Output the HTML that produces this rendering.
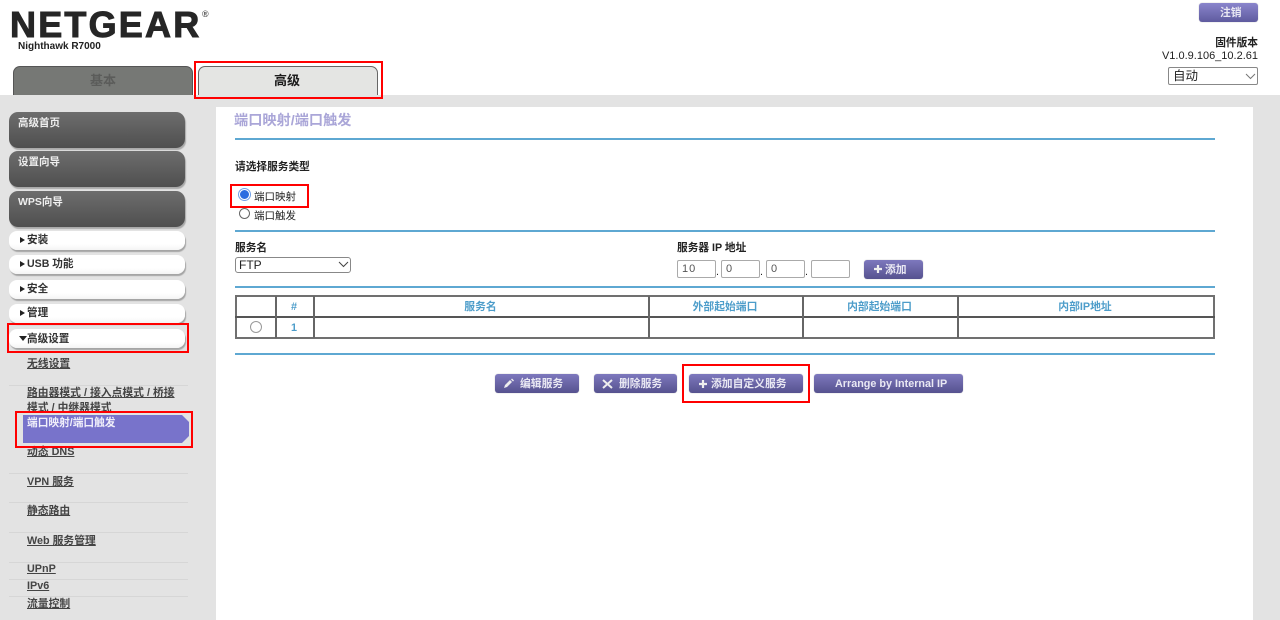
<!DOCTYPE html>
<html lang="zh"><head><meta charset="utf-8"><style>
html,body{margin:0;padding:0;width:1280px;height:620px;overflow:hidden;background:#fff}
body{position:relative;font-family:"Liberation Sans","Noto Sans CJK SC",sans-serif;color:#222;filter:blur(.35px)}
div,span,svg{position:absolute}
.t{white-space:nowrap;font-size:10.7px;font-weight:700;line-height:14px}
.dk{left:9px;width:176px;height:36px;border-radius:9px;background:linear-gradient(#6d6d6d,#4f4f4f);box-shadow:1px 2px 1px #a9a9a9;color:#eee}
.dk span{left:9px;top:4px;font-size:10.5px;font-weight:700;line-height:14px;white-space:nowrap}
.wh{left:9px;width:176px;height:19px;border-radius:8px;background:linear-gradient(#fff 70%,#f4f4f4);box-shadow:1px 2px 1px #a5a5a5}
.wh span{left:18px;top:2px;font-size:10.6px;font-weight:700;line-height:14px;color:#333;white-space:nowrap}
.wh i{position:absolute;left:11px;top:6px;width:0;height:0;border-left:5px solid #222;border-top:3.500px solid transparent;border-bottom:3.500px solid transparent}
.lk{left:27px;color:#444;font-size:10.8px;font-weight:700;line-height:14px;text-decoration:underline;white-space:nowrap}
.sep{left:9px;width:179px;height:1px;background:#d6d6d6}
.bl{left:235px;width:980px;height:2px;background:#5ea8d2}
.btn{height:19px;border-radius:3px;background:linear-gradient(#7d78bd,#56528f);box-shadow:0 0 1px #aaa;color:#e9e8f3;font-size:10.8px;font-weight:700;line-height:20px;text-align:center;white-space:nowrap}
.btl{text-align:left}
.red{border:2px solid #f00;box-sizing:border-box}
.ip{top:260px;height:18px;box-sizing:border-box;border:1px solid #aaa;border-radius:2px;background:#fff;font-size:11px;line-height:16px;color:#555;padding-left:4px;letter-spacing:1px}
.sel{box-sizing:border-box;border:1px solid #888;border-radius:2px;background:#fff;font-size:12px;color:#222}
.th{top:298px;height:19px;line-height:19px;font-size:10.8px;font-weight:700;color:#4d9dca;text-align:center}
.v{width:2px;top:296px;height:42px;background:#666}
</style></head><body>

<!-- Header -->
<div class="t" style="left:10px;top:4px;font-size:36px;line-height:42px;font-weight:700;letter-spacing:2.200px;color:#262626;-webkit-text-stroke:1px #262626">NETGEAR</div>
<div class="t" style="left:202px;top:9px;font-size:9px;line-height:11px;color:#555">®</div>
<div class="t" style="left:18px;top:40px;font-size:10px;line-height:13px;color:#222">Nighthawk R7000</div>

<div style="left:13px;top:66px;width:180px;height:29px;box-sizing:border-box;background:#767875;border:1px solid #555;border-bottom:0;border-radius:7px 7px 0 0"></div>
<div class="t" style="left:90px;top:72px;font-size:13px;line-height:17px;color:#5b5c5a">基本</div>
<div style="left:198px;top:66px;width:180px;height:29px;box-sizing:border-box;background:#e4e5e3;border:1px solid #666;border-bottom:0;border-radius:7px 7px 0 0"></div>
<div class="t" style="left:274px;top:72px;font-size:13px;line-height:17px;color:#1c1c1c">高级</div>

<div class="btn btl" style="left:1199px;top:3px;width:59px;height:19px;background:linear-gradient(#8a85cc,#5f5b9f);text-indent:21px">注销</div>
<div class="t" style="right:22px;top:36px;color:#222">固件版本</div>
<div class="t" style="right:22px;top:49px;font-weight:400;font-size:11px;color:#222">V1.0.9.106_10.2.61</div>
<div class="sel" style="left:1168px;top:67px;width:90px;height:18px;padding-left:4px;line-height:16px;font-size:12.5px">自动</div>
<svg style="left:1245px;top:73px" width="11" height="7" viewBox="0 0 11 7"><path d="M1 1l4.500 4.500L10 1" fill="none" stroke="#777" stroke-width="1"/></svg>

<!-- Backgrounds -->
<div style="left:0;top:95px;width:1280px;height:525px;background:#e3e3e3"></div>
<div style="left:216px;top:107px;width:1037px;height:513px;background:#fff"></div>

<!-- Sidebar -->
<div class="dk" style="top:112px"><span>高级首页</span></div>
<div class="dk" style="top:151px"><span>设置向导</span></div>
<div class="dk" style="top:191px"><span>WPS向导</span></div>
<div class="wh" style="top:231px"><i></i><span>安装</span></div>
<div class="wh" style="top:255px"><i></i><span>USB 功能</span></div>
<div class="wh" style="top:280px"><i></i><span>安全</span></div>
<div class="wh" style="top:304px"><i></i><span>管理</span></div>
<div class="wh" style="top:329px"><i style="left:10px;top:7px;border-left:4px solid transparent;border-right:4px solid transparent;border-top:5px solid #222;border-bottom:0"></i><span style="top:3px">高级设置</span></div>

<div class="lk" style="top:357px">无线设置</div>
<div class="sep" style="top:385px"></div>
<div class="lk" style="top:386px">路由器模式 / 接入点模式 / 桥接</div>
<div class="lk" style="top:401px">模式 / 中继器模式</div>
<svg style="left:23px;top:415px" width="167" height="28" viewBox="0 0 167 28"><path d="M0 0H159L166 7V21L159 28H0Z" fill="#7873cb"/></svg>
<div class="t" style="left:27px;top:416px;color:#f0effa">端口映射/端口触发</div>
<div class="lk" style="top:445px">动态 DNS</div>
<div class="sep" style="top:473px"></div>
<div class="lk" style="top:475px">VPN 服务</div>
<div class="sep" style="top:502px"></div>
<div class="lk" style="top:504px">静态路由</div>
<div class="sep" style="top:532px"></div>
<div class="lk" style="top:534px">Web 服务管理</div>
<div class="sep" style="top:562px"></div>
<div class="lk" style="top:562px">UPnP</div>
<div class="sep" style="top:579px"></div>
<div class="lk" style="top:579px">IPv6</div>
<div class="sep" style="top:596px"></div>
<div class="lk" style="top:597px">流量控制</div>

<!-- Main -->
<div class="t" style="left:234px;top:112px;font-size:14.2px;line-height:18px;color:#aaa6d8">端口映射/端口触发</div>
<div class="bl" style="top:138px"></div>
<div class="t" style="left:235px;top:160px;color:#222">请选择服务类型</div>

<div style="left:239px;top:189px;width:11px;height:11px;box-sizing:border-box;border-radius:50%;background:#2c6ce0;border:1.500px solid #fff;box-shadow:0 0 0 1px #6f9fe8"></div>
<div class="t" style="left:254px;top:190px;font-weight:400;font-size:10.5px;color:#222">端口映射</div>
<div style="left:239px;top:208px;width:11px;height:11px;box-sizing:border-box;border-radius:50%;background:#fff;border:1px solid #666"></div>
<div class="t" style="left:254px;top:209px;font-weight:400;font-size:10.5px;color:#222">端口触发</div>
<div class="bl" style="top:230px"></div>

<div class="t" style="left:235px;top:241px;color:#222">服务名</div>
<div class="sel" style="left:235px;top:257px;width:116px;height:16px;border-color:#888;border-radius:3px;line-height:14px;padding-left:3px">FTP</div>
<svg style="left:338px;top:261px" width="11" height="7" viewBox="0 0 11 7"><path d="M1 1l4.500 4.500L10 1" fill="none" stroke="#444" stroke-width="1"/></svg>

<div class="t" style="left:677px;top:241px;color:#222">服务器 IP 地址</div>
<div class="ip" style="left:677px;width:39px">10</div>
<div class="t" style="left:716px;top:265px;font-weight:400">.</div>
<div class="ip" style="left:721px;width:39px">0</div>
<div class="t" style="left:760px;top:265px;font-weight:400">.</div>
<div class="ip" style="left:766px;width:39px">0</div>
<div class="t" style="left:805px;top:265px;font-weight:400">.</div>
<div class="ip" style="left:811px;width:39px"></div>
<div class="btn btl" style="left:864px;top:260px;width:59px;text-indent:21px">添加</div>
<svg style="left:873px;top:264px" width="10" height="10" viewBox="0 0 10 10"><path d="M5 1v8M1 5h8" stroke="#eee" stroke-width="2.200"/></svg>
<div class="bl" style="top:286px"></div>

<!-- Table -->
<div style="left:235px;top:295px;width:980px;height:44px;box-sizing:border-box;border:2px solid #707070;background:#fff"></div>
<div style="left:235px;top:315.500px;width:980px;height:2px;background:#555"></div>
<div class="v" style="left:274.500px"></div>
<div class="v" style="left:312.500px"></div>
<div class="v" style="left:647.500px"></div>
<div class="v" style="left:801.500px"></div>
<div class="v" style="left:956.500px"></div>
<div class="th" style="left:276px;width:36px">#</div>
<div class="th" style="left:314px;width:333px">服务名</div>
<div class="th" style="left:649px;width:152px">外部起始端口</div>
<div class="th" style="left:803px;width:153px">内部起始端口</div>
<div class="th" style="left:958px;width:254px">内部IP地址</div>
<div style="left:250px;top:321px;width:12px;height:12px;box-sizing:border-box;border-radius:50%;border:1px solid #999;background:#fff"></div>
<div class="th" style="left:276px;width:36px;top:318px;height:20px;line-height:20px">1</div>
<div class="bl" style="top:353px"></div>

<!-- Buttons -->
<div class="btn btl" style="left:495px;top:374px;width:84px;text-indent:25px">编辑服务</div>
<svg style="left:503px;top:378px" width="12" height="11" viewBox="0 0 12 11"><path d="M1 10l1-3 5-5 2 2-5 5zM8 1.500l1-1 2 2-1 1z" fill="#eee"/></svg>
<div class="btn btl" style="left:594px;top:374px;width:83px;text-indent:25px">删除服务</div>
<svg style="left:602px;top:379px" width="11" height="10" viewBox="0 0 11 10"><path d="M1 1l9 8M10 1l-9 8" stroke="#eee" stroke-width="2"/></svg>
<div class="btn btl" style="left:689px;top:374px;width:114px;text-indent:22px">添加自定义服务</div>
<svg style="left:698px;top:379px" width="10" height="10" viewBox="0 0 10 10"><path d="M5 1v8M1 5h8" stroke="#eee" stroke-width="2.200"/></svg>
<div class="btn btl" style="left:814px;top:374px;width:149px;text-indent:21px">Arrange by Internal IP</div>

<!-- Red highlights -->
<div class="red" style="left:194px;top:61px;width:189px;height:38px"></div>
<div class="red" style="left:230px;top:184px;width:79px;height:24px"></div>
<div class="red" style="left:7px;top:323px;width:182px;height:30px"></div>
<div class="red" style="left:15px;top:411px;width:178px;height:37px"></div>
<div class="red" style="left:682px;top:364px;width:128px;height:39px"></div>
</body></html>
